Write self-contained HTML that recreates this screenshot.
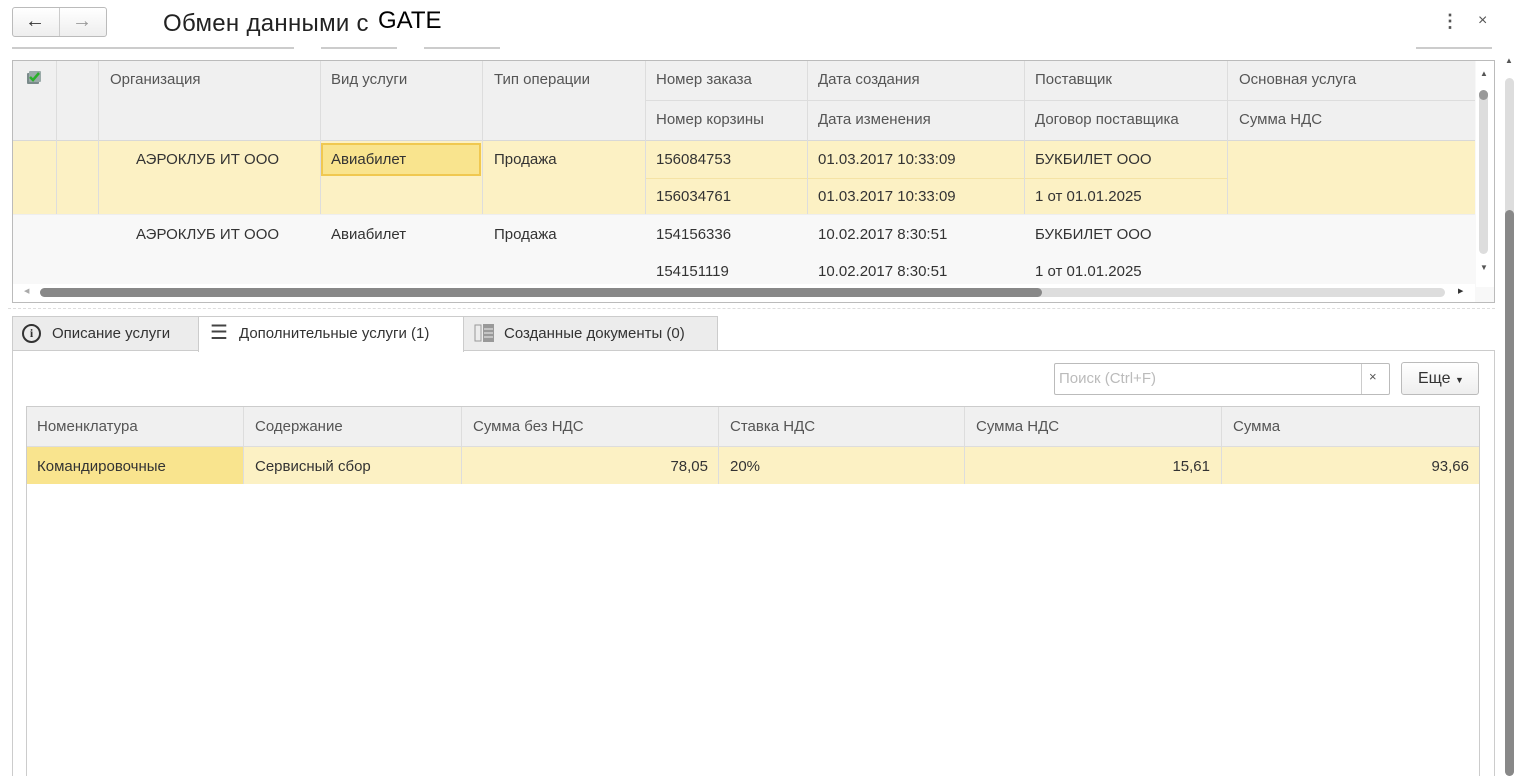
<!DOCTYPE html>
<html><head><meta charset="utf-8"><style>
*{box-sizing:border-box;margin:0;padding:0}
html,body{width:1520px;height:776px;overflow:hidden}
body{background:#fff;font-family:"Liberation Sans",Arial,sans-serif;font-size:15px;color:#333;position:relative}
.a{position:absolute}
.t{position:absolute;white-space:nowrap}
.hd{background:#f0f0f0}
.vl{position:absolute;width:1px;background:#ddd}
.hl{position:absolute;height:1px;background:#ddd}
</style></head><body>
<!-- nav -->
<div class="a" style="left:12px;top:7px;width:95px;height:30px;border:1px solid #bbb;border-radius:3px;background:linear-gradient(#fff,#eee)"></div>
<div class="a" style="left:59px;top:8px;width:1px;height:28px;background:#ccc"></div>
<div class="t" style="left:25px;top:10px;font-size:20px;color:#333">&#8592;</div>
<div class="t" style="left:72px;top:10px;font-size:20px;color:#999">&#8594;</div>
<div class="t" style="left:163px;top:10px;font-size:24px;color:#222;letter-spacing:0.3px">Обмен данными с</div>
<div class="t" style="left:378px;top:7px;font-size:24px;color:#000">GATE</div>
<div class="a" style="left:12px;top:47px;width:282px;height:2px;background:#ccc"></div>
<div class="a" style="left:321px;top:47px;width:76px;height:2px;background:#ccc"></div>
<div class="a" style="left:424px;top:47px;width:76px;height:2px;background:#ccc"></div>
<div class="a" style="left:1416px;top:47px;width:76px;height:2px;background:#ccc"></div>
<div class="t" style="left:1441px;top:11px;font-size:18px;font-weight:bold;color:#555">&#8942;</div>
<div class="t" style="left:1478px;top:12px;font-size:16px;color:#555">&#215;</div>
<!-- page scrollbar -->
<div class="t" style="left:1505px;top:56px;font-size:8px;color:#555">&#9650;</div>
<div class="a" style="left:1505px;top:78px;width:9px;height:698px;border-radius:5px;background:#ddd"></div>
<div class="a" style="left:1505px;top:210px;width:9px;height:566px;border-radius:5px;background:#888"></div>
<!-- top table -->
<div class="a" style="left:12px;top:60px;width:1483px;height:243px;border:1px solid #bbb;background:#f8f8f8"></div>
<div class="a hd" style="left:13px;top:61px;width:1462px;height:79px"></div>
<div class="a" style="left:13px;top:140px;width:1462px;height:74px;background:#fcf1c4"></div>
<div class="a" style="left:321px;top:143px;width:160px;height:33px;background:#f9e48e;border:2px solid #f0c850"></div>
<div class="hl" style="left:645px;top:100px;width:830px"></div>
<div class="hl" style="left:13px;top:140px;width:1462px;background:#d8d8d8"></div>
<div class="hl" style="left:645px;top:178px;width:582px;background:#f5e3a5"></div>
<div class="hl" style="left:13px;top:214px;width:1462px;background:#eee"></div>
<div class="vl" style="left:56px;top:61px;height:153px"></div>
<div class="vl" style="left:98px;top:61px;height:153px"></div>
<div class="vl" style="left:320px;top:61px;height:153px"></div>
<div class="vl" style="left:482px;top:61px;height:153px"></div>
<div class="vl" style="left:645px;top:61px;height:153px"></div>
<div class="vl" style="left:807px;top:61px;height:153px"></div>
<div class="vl" style="left:1024px;top:61px;height:153px"></div>
<div class="vl" style="left:1227px;top:61px;height:153px"></div>
<svg class="a" style="left:25px;top:69px" width="18" height="18" viewBox="0 0 18 18"><rect x="2" y="4" width="12" height="11" fill="#7a8a8a" rx="1"/><rect x="4" y="2" width="12" height="11" fill="#9aaaa8" rx="1"/><path d="M5 8l3 3 6-7" stroke="#2ab02a" stroke-width="2.5" fill="none"/></svg>
<div class="t" style="left:110px;top:71px;color:#555">Организация</div>
<div class="t" style="left:331px;top:71px;color:#555">Вид услуги</div>
<div class="t" style="left:494px;top:71px;color:#555">Тип операции</div>
<div class="t" style="left:656px;top:71px;color:#555">Номер заказа</div>
<div class="t" style="left:818px;top:71px;color:#555">Дата создания</div>
<div class="t" style="left:1035px;top:71px;color:#555">Поставщик</div>
<div class="t" style="left:1239px;top:71px;color:#555">Основная услуга</div>
<div class="t" style="left:656px;top:111px;color:#555">Номер корзины</div>
<div class="t" style="left:818px;top:111px;color:#555">Дата изменения</div>
<div class="t" style="left:1035px;top:111px;color:#555">Договор поставщика</div>
<div class="t" style="left:1239px;top:111px;color:#555">Сумма НДС</div>
<div class="t" style="left:136px;top:151px">АЭРОКЛУБ ИТ ООО</div>
<div class="t" style="left:331px;top:151px">Авиабилет</div>
<div class="t" style="left:494px;top:151px">Продажа</div>
<div class="t" style="left:656px;top:151px">156084753</div>
<div class="t" style="left:818px;top:151px">01.03.2017 10:33:09</div>
<div class="t" style="left:1035px;top:151px">БУКБИЛЕТ ООО</div>
<div class="t" style="left:656px;top:188px">156034761</div>
<div class="t" style="left:818px;top:188px">01.03.2017 10:33:09</div>
<div class="t" style="left:1035px;top:188px">1 от 01.01.2025</div>
<div class="t" style="left:136px;top:226px">АЭРОКЛУБ ИТ ООО</div>
<div class="t" style="left:331px;top:226px">Авиабилет</div>
<div class="t" style="left:494px;top:226px">Продажа</div>
<div class="t" style="left:656px;top:226px">154156336</div>
<div class="t" style="left:818px;top:226px">10.02.2017 8:30:51</div>
<div class="t" style="left:1035px;top:226px">БУКБИЛЕТ ООО</div>
<div class="t" style="left:656px;top:263px">154151119</div>
<div class="t" style="left:818px;top:263px">10.02.2017 8:30:51</div>
<div class="t" style="left:1035px;top:263px">1 от 01.01.2025</div>
<div class="a" style="left:1476px;top:61px;width:18px;height:226px;background:#fff"></div>
<div class="t" style="left:1480px;top:69px;font-size:8px;color:#555">&#9650;</div>
<div class="a" style="left:1479px;top:90px;width:9px;height:164px;border-radius:5px;background:#ddd"></div>
<div class="a" style="left:1479px;top:90px;width:9px;height:10px;border-radius:5px;background:#999"></div>
<div class="t" style="left:1480px;top:263px;font-size:8px;color:#555">&#9660;</div>
<div class="a" style="left:13px;top:284px;width:1462px;height:18px;background:#fff"></div>
<div class="t" style="left:24px;top:287px;font-size:7px;color:#aaa">&#9664;</div>
<div class="a" style="left:40px;top:288px;width:1405px;height:9px;border-radius:5px;background:#ddd"></div>
<div class="a" style="left:40px;top:288px;width:1002px;height:9px;border-radius:5px;background:#888"></div>
<div class="t" style="left:1458px;top:287px;font-size:7px;color:#333">&#9654;</div>
<div class="a" style="left:8px;top:308px;width:1487px;border-top:1px dashed #ddd"></div>
<!-- tabs -->
<div class="a" style="left:12px;top:350px;width:1483px;height:440px;border:1px solid #ccc;background:#fff"></div>
<div class="a" style="left:12px;top:316px;width:187px;height:35px;background:#ececec;border:1px solid #ccc"></div>
<div class="a" style="left:463px;top:316px;width:255px;height:35px;background:#ececec;border:1px solid #ccc"></div>
<div class="a" style="left:198px;top:316px;width:266px;height:36px;background:#fff;border:1px solid #ccc;border-bottom:none"></div>
<div class="a" style="left:22px;top:324px;width:19px;height:19px;border:2px solid #333;border-radius:50%;font:bold 12px 'Liberation Serif',serif;text-align:center;line-height:15px">i</div>
<div class="t" style="left:52px;top:325px">Описание услуги</div>
<div class="t" style="left:210px;top:320px;font-size:20px;color:#444">&#9776;</div>
<div class="t" style="left:239px;top:325px">Дополнительные услуги (1)</div>
<svg class="a" style="left:474px;top:323px" width="22" height="20" viewBox="0 0 22 20"><rect x="1" y="2" width="6" height="16" fill="none" stroke="#999"/><rect x="9" y="1" width="11" height="18" fill="#999"/><path d="M10 6h9M10 10h9M10 14h9" stroke="#eee"/></svg>
<div class="t" style="left:504px;top:325px">Созданные документы (0)</div>
<!-- search -->
<div class="a" style="left:1054px;top:363px;width:336px;height:32px;border:1px solid #bbb;border-radius:2px;background:#fff"></div>
<div class="a" style="left:1361px;top:364px;width:1px;height:30px;background:#ccc"></div>
<div class="t" style="left:1059px;top:370px;color:#bbb">Поиск (Ctrl+F)</div>
<div class="t" style="left:1369px;top:369px;font-size:13px;color:#555">&#215;</div>
<div class="a" style="left:1401px;top:362px;width:78px;height:33px;border:1px solid #bbb;border-radius:3px;background:linear-gradient(#fff,#eee)"></div>
<div class="t" style="left:1418px;top:370px;font-size:16px">Еще <span style="font-size:9px">&#9660;</span></div>
<!-- lower table -->
<div class="a" style="left:26px;top:406px;width:1454px;height:390px;border:1px solid #ccc;background:#fff"></div>
<div class="a hd" style="left:27px;top:407px;width:1452px;height:39px"></div>
<div class="a" style="left:27px;top:447px;width:1452px;height:37px;background:#fcf1c4"></div>
<div class="a" style="left:27px;top:447px;width:216px;height:37px;background:#f9e48e"></div>
<div class="hl" style="left:27px;top:446px;width:1452px"></div>
<div class="vl" style="left:243px;top:407px;height:77px"></div>
<div class="vl" style="left:461px;top:407px;height:77px"></div>
<div class="vl" style="left:718px;top:407px;height:77px"></div>
<div class="vl" style="left:964px;top:407px;height:77px"></div>
<div class="vl" style="left:1221px;top:407px;height:77px"></div>
<div class="t" style="left:37px;top:418px;color:#555">Номенклатура</div>
<div class="t" style="left:255px;top:418px;color:#555">Содержание</div>
<div class="t" style="left:473px;top:418px;color:#555">Сумма без НДС</div>
<div class="t" style="left:730px;top:418px;color:#555">Ставка НДС</div>
<div class="t" style="left:976px;top:418px;color:#555">Сумма НДС</div>
<div class="t" style="left:1233px;top:418px;color:#555">Сумма</div>
<div class="t" style="left:37px;top:458px">Командировочные</div>
<div class="t" style="left:255px;top:458px">Сервисный сбор</div>
<div class="t" style="left:470px;top:458px;width:238px;text-align:right">78,05</div>
<div class="t" style="left:730px;top:458px">20%</div>
<div class="t" style="left:970px;top:458px;width:240px;text-align:right">15,61</div>
<div class="t" style="left:1230px;top:458px;width:239px;text-align:right">93,66</div>
</body></html>
